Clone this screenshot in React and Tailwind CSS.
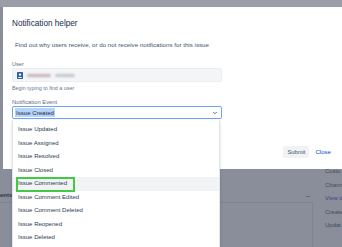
import { ChevronDown } from "lucide-react";

const events = [
  "Issue Updated",
  "Issue Assigned",
  "Issue Resolved",
  "Issue Closed",
  "Issue Commented",
  "Issue Comment Edited",
  "Issue Comment Deleted",
  "Issue Reopened",
  "Issue Deleted",
];

const sidebar = ["Custo", "Chann", "View d", "Create", "Updat"];

function UserAvatar() {
  return (
    <svg width="6" height="7" viewBox="0 0 6 7">
      <rect width="6" height="7" rx="0.8" fill="#2d5caa" />
      <circle cx="3" cy="2.6" r="1.2" fill="#fff" />
      <path d="M1 6 C1 4.6 5 4.6 5 6 Z" fill="#fff" />
    </svg>
  );
}

export default function App() {
  return (
    <div className="relative w-[342px] h-[247px] overflow-hidden bg-[#898e9a] font-['Liberation_Sans',Arial,sans-serif]">
      {/* page behind the overlay */}
      <div className="h-[7px] bg-[#9a9ea8]" />
      <div className="flex h-[240px]">
        <div className="w-[313px] shrink-0 flex flex-col pt-[182px]">
          <div className="flex items-center justify-between h-[14px] pr-[3px] border-b border-[#7f8490]">
            <span className="text-[6px] font-bold text-[#2f3542]">ents</span>
            <span className="text-[7px] leading-none text-[#2f3542] tracking-[-0.5px] pb-[3px]">...</span>
          </div>
          <div className="flex-1 border-r border-[#7f8490]" />
        </div>
        <div className="flex-1 min-w-0 flex flex-col pl-[12px] pt-[161px] gap-[6.6px]">
          {sidebar.map((s, i) => (
            <span
              key={s}
              className={`text-[6px] leading-[7px] whitespace-nowrap ${i === 2 ? "text-[#3a4c80]" : "text-[#444a57]"}`}
            >
              {s}
            </span>
          ))}
        </div>
      </div>

      {/* modal */}
      <div className="absolute left-[3px] top-[7px] w-[339px] h-[162px] bg-white flex flex-col pl-[9px] pr-[11px]">
        <h2 className="pt-[12px] text-[8.2px] leading-[10px] text-[#172b4d]">Notification helper</h2>
        <p className="mt-[12px] ml-[3px] text-[6.2px] leading-[8px] text-[#42526e]">
          Find out why users receive, or do not receive notifications for this issue
        </p>
        <label className="mt-[11.5px] text-[5.6px] leading-[7px] text-[#5e6c84]">User</label>
        <div className="mt-[0.5px] w-[210px] h-[14px] rounded-[2px] bg-[#f4f5f7] border border-[#eceef1] flex items-center pl-[4px] gap-[4px]">
          <UserAvatar />
          <div className="w-[24px] h-[3px] rounded-full bg-[#c8b2bd] blur-[1px]" />
          <div className="w-[20px] h-[3px] rounded-full bg-[#c3c6cd] blur-[1px]" />
        </div>
        <p className="mt-[2.5px] text-[5.4px] leading-[7px] text-[#6b778c]">Begin typing to find a user</p>
        <label className="mt-[7px] text-[5.8px] leading-[7px] text-[#5e6c84]">Notification Event</label>
        <div className="mt-[0.5px] w-[210px] h-[13px] rounded-[2px] border border-[#6fa4f0] flex items-center justify-between pl-[2px] pr-[3px]">
          <span className="text-[6.1px] leading-[9px] font-medium text-[#172b4d] bg-[#b7d3f7] px-[1px]">Issue Created</span>
          <ChevronDown size={6} strokeWidth={3.5} className="text-[#42526e]" />
        </div>
        <div className="mt-auto mb-[11px] flex justify-end items-center gap-[6px]">
          <button className="h-[12px] w-[26px] rounded-[2px] bg-[#f1f2f4] text-[5.8px] text-[#42526e]">Submit</button>
          <button className="text-[6.1px] text-[#0052cc]">Close</button>
        </div>
      </div>

      {/* dropdown list */}
      <ul className="absolute left-[12px] top-[120px] w-[208px] h-[140px] bg-white border-x border-[#e3e5e9] shadow-[0_1px_3px_rgba(9,30,66,0.15)] pt-[3px]">
        {events.map((e) => (
          <li
            key={e}
            className={`relative h-[13.54px] flex items-center pl-[5px] text-[6.05px] text-[#2c3a52] ${e === "Issue Commented" ? "bg-[#f2f3f5]" : ""}`}
          >
            {e}
            {e === "Issue Commented" && (
              <span className="absolute left-[3px] top-[-0.6px] w-[59px] h-[15px] border-2 border-[#43c943]" />
            )}
          </li>
        ))}
      </ul>
    </div>
  );
}
